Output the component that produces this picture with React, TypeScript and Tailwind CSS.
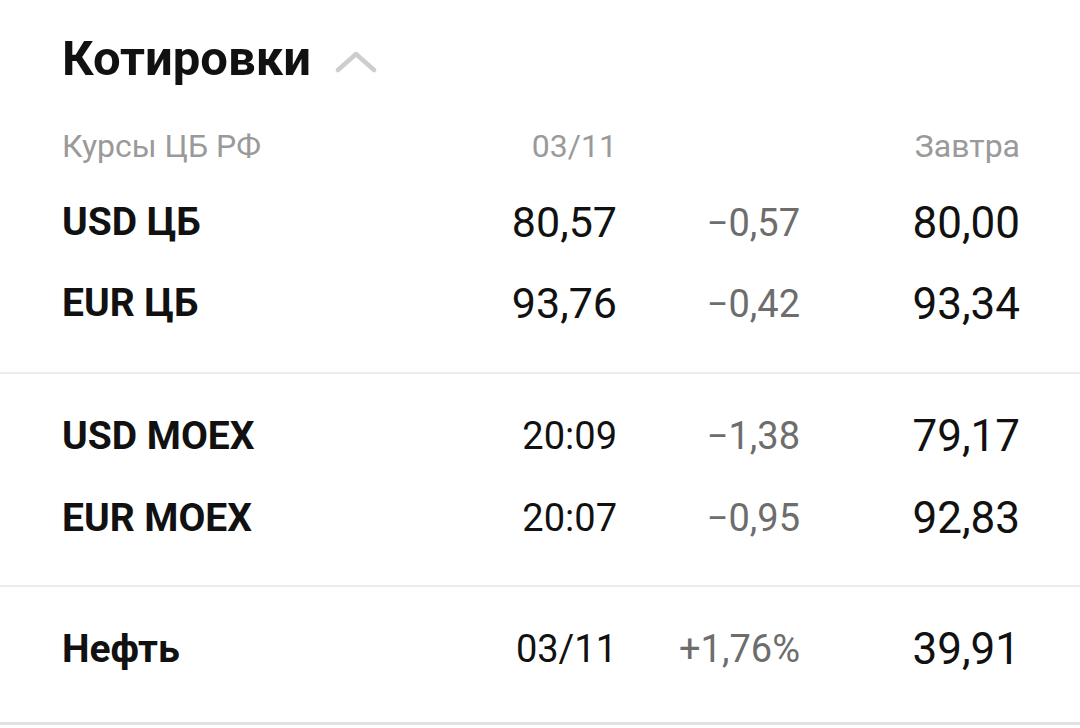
import React from 'react';

type Row = {
  name: string;
  when: string;
  change: string;
  value: string;
  bigWhen?: boolean;
};

const cbRows: Row[] = [
  { name: 'USD ЦБ', when: '80,57', change: '−0,57', value: '80,00', bigWhen: true },
  { name: 'EUR ЦБ', when: '93,76', change: '−0,42', value: '93,34', bigWhen: true },
];

const moexRows: Row[] = [
  { name: 'USD MOEX', when: '20:09', change: '−1,38', value: '79,17' },
  { name: 'EUR MOEX', when: '20:07', change: '−0,95', value: '92,83' },
];

const oilRows: Row[] = [{ name: 'Нефть', when: '03/11', change: '+1,76%', value: '39,91' }];

const grid = 'grid grid-cols-[315px_240px_183px_220px] items-center';

const QuoteRow = ({ row, height }: { row: Row; height: string }) => (
  <div className={`${grid} ${height}`}>
    <div className="text-[39px] font-bold text-[#111] leading-none">{row.name}</div>
    <div
      className={`text-right leading-none text-[#111] ${row.bigWhen ? 'text-[43px]' : 'text-[38px]'}`}
    >
      {row.when}
    </div>
    <div className="text-right text-[38px] leading-none text-[#6d6d6d]">{row.change}</div>
    <div className="text-right text-[44px] leading-none text-[#111]">{row.value}</div>
  </div>
);

const ChevronUp = () => (
  <svg width="42" height="24" viewBox="0 0 42 24" className="ml-[24px] mt-[8px]">
    <polyline
      points="3,20 21,4 39,20"
      fill="none"
      stroke="#cdcdcd"
      strokeWidth="4.5"
      strokeLinecap="round"
      strokeLinejoin="round"
    />
  </svg>
);

export default function App() {
  return (
    <div className="w-[1080px] h-[728px] bg-white overflow-hidden font-['Roboto',sans-serif]">
      <div className="pl-[62px]">
        {/* header */}
        <div className="flex items-center h-[116px]">
          <h1 className="text-[49px] font-bold text-[#111] leading-none">Котировки</h1>
          <ChevronUp />
        </div>

        <div className={`${grid} h-[60px] text-[32px] text-[#9a9a9a] leading-none`}>
          <div>Курсы ЦБ РФ</div>
          <div className="text-right">03/11</div>
          <div />
          <div className="text-right">Завтра</div>
        </div>

        <div className="pt-[6px] pb-[28px]">
          {cbRows.map((r) => (
            <QuoteRow key={r.name} row={r} height="h-[81px]" />
          ))}
        </div>
      </div>

      <div className="h-[2px] bg-[#ececec]" />

      <div className="pl-[62px] pt-[21px] pb-[26px]">
        {moexRows.map((r) => (
          <QuoteRow key={r.name} row={r} height="h-[82px]" />
        ))}
      </div>

      <div className="h-[2px] bg-[#ececec]" />

      <div className="pl-[62px] pt-[24px] pb-[35px] border-b-[3px] border-[#e2e2e2]">
        {oilRows.map((r) => (
          <QuoteRow key={r.name} row={r} height="h-[76px]" />
        ))}
      </div>
    </div>
  );
}
